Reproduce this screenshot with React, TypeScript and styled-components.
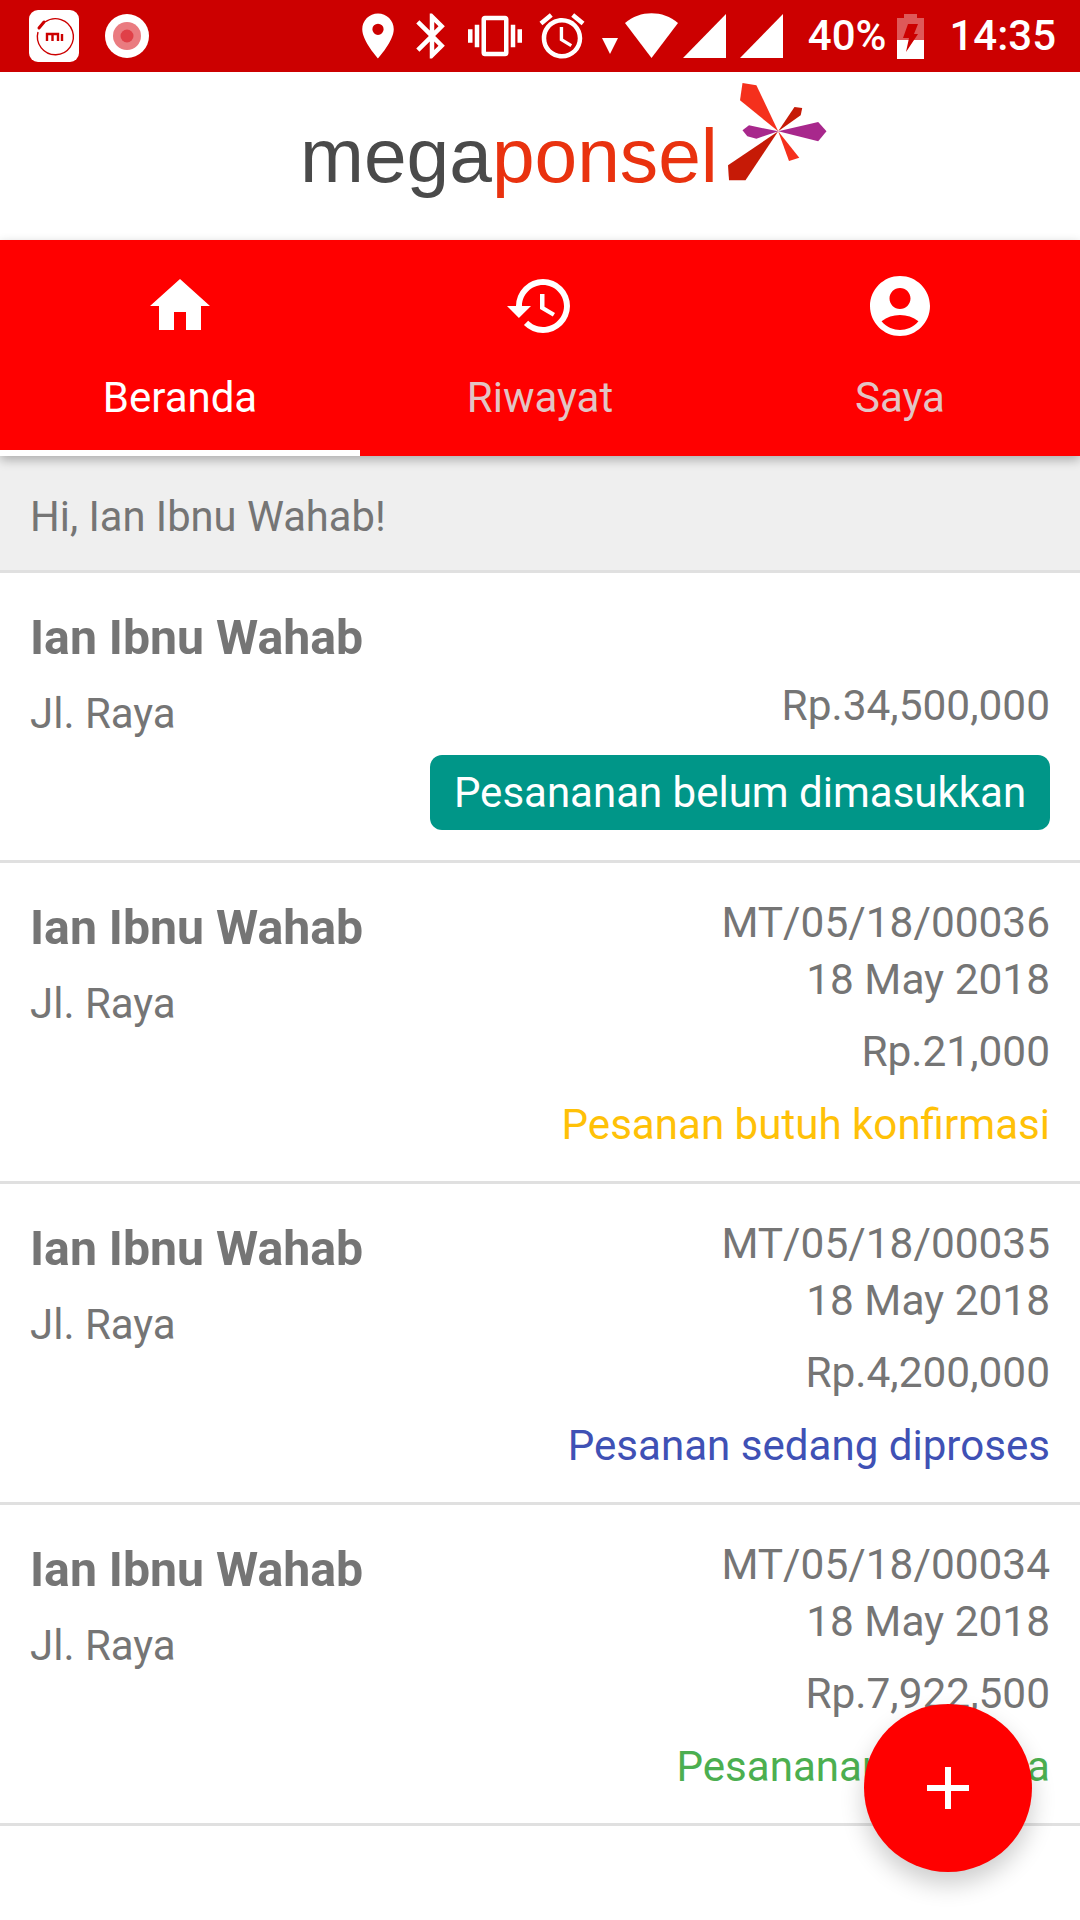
import React from 'react';
import styled, { createGlobalStyle } from 'styled-components';
import { MdHome, MdHistory, MdAccountCircle, MdLocationOn, MdBluetooth, MdVibration, MdAccessAlarm, MdAdd } from 'react-icons/md';

const GlobalStyle = createGlobalStyle`
  html, body {
    margin: 0;
    padding: 0;
    background: #fff;
    font-family: Roboto, "Liberation Sans", sans-serif;
  }
`

const Screen = styled.div`
  position: relative;
  width: 1080px;
  height: 1920px;
  overflow: hidden;
  background: #fff;
  color: #757575;
`

const StatusBar = styled.div`
  height: 72px;
  background: #cc0000;
  color: #fff;
  display: flex;
  align-items: center;
  justify-content: space-between;
  padding: 0 24px 0 29px;
  box-sizing: border-box;
`

const StatusGroup = styled.div`
  display: flex;
  align-items: center;
`

const StatusSlot = styled.div<{ $left?: number }>`
  display: flex;
  align-items: center;
  margin-left: ${(p) => p.$left || 0}px;
`

const StatusText = styled.span<{ $left: number }>`
  margin-left: ${(p) => p.$left}px;
  font-size: 42px;
  font-weight: 500;
  line-height: 72px;
`

const Header = styled.div`
  height: 168px;
  display: flex;
  align-items: flex-start;
  justify-content: center;
  padding-left: 47px;
  box-sizing: border-box;
`

const LogoMark = styled.div`
  display: flex;
  align-items: flex-start;
`

const LogoWord = styled.div`
  margin-top: 36px;
  font-family: "Liberation Sans", Arial, sans-serif;
  font-size: 76.7px;
  line-height: 96px;
  color: #4a4a4a;
`

const LogoAccent = styled.span`
  color: #e9320f;
`

const LogoStar = styled.svg`
  margin: 11px 0 0 10px;
`

const TabBar = styled.div`
  position: relative;
  z-index: 2;
  height: 216px;
  display: flex;
  background: #ff0000;
  box-shadow: 0 4px 10px rgba(0, 0, 0, 0.28);
`

const Tab = styled.div<{ $active?: boolean }>`
  flex: 1;
  display: flex;
  flex-direction: column;
  align-items: center;
  box-sizing: border-box;
  padding-top: 30px;
  color: ${(p) => (p.$active ? '#fff' : '#e2c4c4')};
  font-size: 42px;
  border-bottom: 6px solid ${(p) => (p.$active ? '#fff' : 'transparent')};
`

const TabIcon = styled.div`
  height: 72px;
  color: #fff;
  display: flex;
  align-items: center;
  justify-content: center;
`

const TabLabel = styled.div`
  margin-top: 28px;
  line-height: 56px;
`

const Greeting = styled.div`
  height: 117px;
  box-sizing: border-box;
  padding: 7px 30px 0;
  display: flex;
  align-items: center;
  background: #efefef;
  border-bottom: 3px solid #e0e0e0;
  font-size: 41.7px;
`

const Card = styled.div<{ $height: number }>`
  height: ${(p) => p.$height}px;
  box-sizing: border-box;
  padding: 0 30px;
  display: flex;
  justify-content: space-between;
  border-bottom: 3px solid #e0e0e0;
`

const LeftCol = styled.div`
  padding-top: 35px;
`

const Name = styled.div`
  font-size: 48.2px;
  font-weight: 700;
  line-height: 60px;
`

const Address = styled.div`
  margin-top: 16px;
  font-size: 42px;
  line-height: 60px;
`

const RightCol = styled.div`
  padding-top: 31px;
  display: flex;
  flex-direction: column;
  align-items: flex-end;
  font-size: 42.4px;
`

const Line = styled.div<{ $top?: number }>`
  margin-top: ${(p) => p.$top || 0}px;
  line-height: 57px;
`

const OrderStatus = styled(Line)<{ $color: string }>`
  font-size: 42.1px;
  color: ${(p) => p.$color};
`

const Badge = styled.div`
  margin-top: 21px;
  height: 75px;
  width: 620px;
  box-sizing: border-box;
  display: flex;
  align-items: center;
  justify-content: center;
  background: #009688;
  color: #fff;
  border-radius: 12px;
  font-size: 42px;
`

const Fab = styled.div`
  position: absolute;
  left: 864px;
  top: 1704px;
  width: 168px;
  height: 168px;
  border-radius: 50%;
  background: #ff0000;
  color: #fff;
  display: flex;
  align-items: center;
  justify-content: center;
  box-shadow: 0 12px 24px rgba(0, 0, 0, 0.2);
`

const WifiSignal = () => (
  <svg width="76" height="46" viewBox="0 0 76 46">
    <path d="M0 25 L16 25 L8 41 Z" fill="#fff" />
    <path d="M23 10 C38 -3 61 -3 76 10 L49.5 45 Z" fill="#fff" />
  </svg>
)

const CellSignal = () => (
  <svg width="43" height="44" viewBox="0 0 43 44">
    <path d="M0 44 L43 0 L43 44 Z" fill="#fff" />
  </svg>
)

const BatteryIcon = () => (
  <svg width="27" height="45" viewBox="0 0 27 45">
    <path d="M7 0 H20 V4 H27 V45 H0 V4 H7 Z" fill="#fff" opacity="0.35" />
    <path d="M0 26 H27 V45 H0 Z" fill="#fff" />
    <path d="M11 10 H21 L17 20 H21 L9 38 L12 24 H6 Z" fill="#cc0000" />
  </svg>
)

const MiIcon = () => (
  <svg width="50" height="52" viewBox="0 0 50 52">
    <rect x="0" y="0" width="50" height="52" rx="9" fill="#fff" />
    <path d="M16 12 A18 18 0 1 1 9 22" fill="none" stroke="#cc0000" strokeWidth="1.4" />
    <path d="M10 18 L15 12" stroke="#cc0000" strokeWidth="3" strokeLinecap="round" />
    <path d="M18 31 V24 H29 V31 M23.5 24 V31" fill="none" stroke="#cc0000" strokeWidth="2.4" />
    <path d="M33 24 V31" stroke="#cc0000" strokeWidth="2.4" />
  </svg>
)

const RecordIcon = () => (
  <svg width="44" height="46" viewBox="0 0 44 46">
    <circle cx="22" cy="23" r="22" fill="#fff" />
    <circle cx="22" cy="23" r="14" fill="#ea7b80" />
    <circle cx="22" cy="23" r="6.5" fill="#e04048" />
  </svg>
)

const StarLogo = () => (
  <LogoStar width="99" height="98" viewBox="0 0 99 98">
    <path d="M14.5 0 L28.4 2.3 L50.2 48.3 L12 17.3 Z" fill="#f5301c" />
    <path d="M50.2 48.3 L66.5 24 L74.2 25 L72.7 32.3 Z" fill="#c61a06" />
    <path d="M50.2 48.3 L90.2 39 L98.5 48.3 L90.2 58.3 Z" fill="#a8288c" />
    <path d="M50.2 48.3 L28.4 55.7 L19.3 53.3 L14.5 47.3 L21 42.3 Z" fill="#a8288c" />
    <path d="M50.2 48.3 L71.3 74.7 L61 78 Z" fill="#f5301c" />
    <path d="M50.2 48.3 L0 82.3 L1 97.3 L17.5 97.3 Z" fill="#c61a06" />
  </LogoStar>
)

type Order = {
  code: string,
  total: string,
  status: string,
  color: string,
}

const orders: Order[] = [
  { code: 'MT/05/18/00036', total: 'Rp.21,000', status: 'Pesanan butuh konfirmasi', color: '#ffc107' },
  { code: 'MT/05/18/00035', total: 'Rp.4,200,000', status: 'Pesanan sedang diproses', color: '#3f51b5' },
  { code: 'MT/05/18/00034', total: 'Rp.7,922,500', status: 'Pesananan diterima', color: '#4caf50' },
]

const App = () => {
  return (
    <Screen>
      <GlobalStyle />
      <StatusBar>
        <StatusGroup>
          <MiIcon />
          <StatusSlot $left={26}><RecordIcon /></StatusSlot>
        </StatusGroup>
        <StatusGroup>
          <MdLocationOn size={54} />
          <StatusSlot $left={0}><MdBluetooth size={54} /></StatusSlot>
          <StatusSlot $left={9}><MdVibration size={54} /></StatusSlot>
          <StatusSlot $left={13}><MdAccessAlarm size={54} /></StatusSlot>
          <StatusSlot $left={13}><WifiSignal /></StatusSlot>
          <StatusSlot $left={5}><CellSignal /></StatusSlot>
          <StatusSlot $left={14}><CellSignal /></StatusSlot>
          <StatusText $left={25}>40%</StatusText>
          <StatusSlot $left={11}><BatteryIcon /></StatusSlot>
          <StatusText $left={25}>14:35</StatusText>
        </StatusGroup>
      </StatusBar>

      <Header>
        <LogoMark>
          <LogoWord>mega<LogoAccent>ponsel</LogoAccent></LogoWord>
          <StarLogo />
        </LogoMark>
      </Header>

      <TabBar>
        <Tab $active>
          <TabIcon><MdHome size={72} /></TabIcon>
          <TabLabel>Beranda</TabLabel>
        </Tab>
        <Tab>
          <TabIcon><MdHistory size={72} /></TabIcon>
          <TabLabel>Riwayat</TabLabel>
        </Tab>
        <Tab>
          <TabIcon><MdAccountCircle size={72} /></TabIcon>
          <TabLabel>Saya</TabLabel>
        </Tab>
      </TabBar>

      <Greeting>Hi, Ian Ibnu Wahab!</Greeting>

      <Card $height={290}>
        <LeftCol>
          <Name>Ian Ibnu Wahab</Name>
          <Address>Jl. Raya</Address>
        </LeftCol>
        <RightCol>
          <Line $top={73}>Rp.34,500,000</Line>
          <Badge>Pesananan belum dimasukkan</Badge>
        </RightCol>
      </Card>

      {orders.map((order) => (
        <Card $height={321} key={order.code}>
          <LeftCol>
            <Name>Ian Ibnu Wahab</Name>
            <Address>Jl. Raya</Address>
          </LeftCol>
          <RightCol>
            <Line>{order.code}</Line>
            <Line>18 May 2018</Line>
            <Line $top={15}>{order.total}</Line>
            <OrderStatus $top={16} $color={order.color}>{order.status}</OrderStatus>
          </RightCol>
        </Card>
      ))}

      <Fab><MdAdd size={72} /></Fab>
    </Screen>
  )
}

export default App;
